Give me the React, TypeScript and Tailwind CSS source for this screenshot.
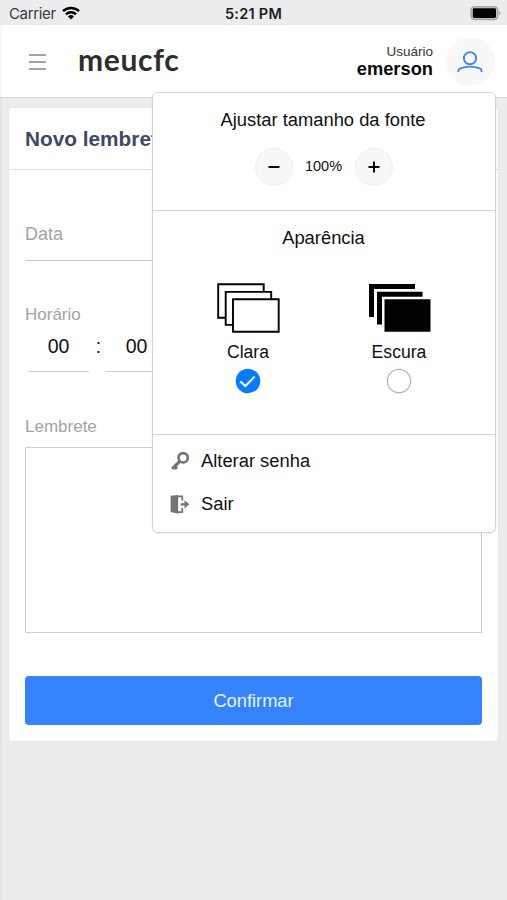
import { useState } from "react";

const THEMES = [
  { id: "clara", label: "Clara", dark: false },
  { id: "escura", label: "Escura", dark: true },
];

function StatusBar() {
  return (
    <div className="grid h-[25px] grid-cols-3 items-center bg-[#ebecee] font-['Inter',sans-serif] text-[#1c1c1e]">
      <div className="flex items-center gap-[6px] pl-[9px] pt-px">
        <span className="text-[15px] leading-none tracking-[-0.35px] text-[#3a3a3c]">
          Carrier
        </span>
        <svg className="h-[14px] w-[18px]" viewBox="0 0 18 14">
          <g fill="none" stroke="#000" strokeWidth="2.5">
            <path d="M1 5.2a11.4 11.4 0 0 1 16 0" />
            <path d="M4 8.4a7.1 7.1 0 0 1 10 0" />
          </g>
          <path d="M6 10.5a4.3 4.3 0 0 1 6 0L9 13.6z" />
        </svg>
      </div>
      <span className="pt-[3px] text-center text-[14.5px] leading-none font-semibold tracking-[0.25px]">
        5:21 PM
      </span>
      <svg
        className="mr-[6px] h-[16px] w-[31px] justify-self-end"
        viewBox="0 0 31 16"
      >
        <rect
          x="1"
          y="1.7"
          width="26.8"
          height="12.8"
          rx="3.6"
          fill="#c4c4c5"
          stroke="#a5a5a7"
          strokeWidth="1.4"
        />
        <rect x="2.8" y="3.2" width="23.2" height="9.8" rx="1.4" />
        <path d="M29 6.2c2 .6 2 3.2 0 3.8z" fill="#a5a5a7" />
      </svg>
    </div>
  );
}

function ThemeIcon({ dark }: { dark: boolean }) {
  if (dark) {
    return (
      <svg className="h-[50px] w-[63px]" viewBox="0 0 63 50">
        <path d="M1 1h46v5H6v28H1z" />
        <path d="M9 8.8h45.5v5H14v27.7H9z" />
        <path d="M16.5 16.2h46v32.5h-46z" />
      </svg>
    );
  }
  return (
    <svg className="h-[50px] w-[63px]" viewBox="0 0 63 50">
      <g fill="#fff" stroke="#000" strokeWidth="1.9">
        <path d="M1.2 1.3h45.5v33.5H1.2z" />
        <path d="M8.7 8.9h45.5v33H8.7z" />
        <path d="M16 16.2h45.7v32.5H16z" />
      </g>
    </svg>
  );
}

function UserMenu() {
  const [zoom, setZoom] = useState(100);
  const [theme, setTheme] = useState("clara");

  return (
    <div className="absolute top-[92px] left-[152px] z-10 h-[441px] w-[344px] rounded-[6px] border-[1.5px] border-[#d3d4d5] bg-white text-[18.35px] text-[#111] shadow-[0_1px_2px_rgba(0,0,0,0.08)]">
      <div className="flex h-[118px] flex-col items-center border-b border-[#d6d6d6]">
        <p className="mt-[14px] pr-[2px] leading-[26px]">
          Ajustar tamanho da fonte
        </p>
        <div className="mt-[15px] flex items-center pr-px">
          <button
            onClick={() => setZoom(zoom - 10)}
            className="flex size-[38px] items-center justify-center rounded-full border border-[#efefef] bg-[#f8f8f8]"
            aria-label="Diminuir"
          >
            <svg className="h-3 w-3" viewBox="0 0 12 12">
              <path d="M.5 6h11" stroke="#000" strokeWidth="1.9" />
            </svg>
          </button>
          <span className="w-[62px] text-center text-[14.5px]">{zoom}%</span>
          <button
            onClick={() => setZoom(zoom + 10)}
            className="flex size-[38px] items-center justify-center rounded-full border border-[#efefef] bg-[#f8f8f8]"
            aria-label="Aumentar"
          >
            <svg className="h-3 w-3" viewBox="0 0 12 12">
              <path d="M.5 6h11M6 .5v11" stroke="#000" strokeWidth="1.9" />
            </svg>
          </button>
        </div>
      </div>

      <div className="h-[224px] border-b border-[#d6d6d6] pt-[14px] pr-px">
        <p className="text-center leading-[26px]">Aparência</p>
        <div className="mt-[32px] grid grid-cols-[151px_151px] justify-center">
          {THEMES.map((item) => (
            <button
              key={item.id}
              onClick={() => setTheme(item.id)}
              className="flex flex-col items-center"
            >
              <ThemeIcon dark={item.dark} />
              <span className="mt-[7px] text-[17.6px] leading-[24px]">
                {item.label}
              </span>
              {theme === item.id ? (
                <svg className="mt-[4px] size-[26px]" viewBox="0 0 26 26">
                  <circle cx="13" cy="13" r="12.3" fill="#087bfd" />
                  <path
                    d="M5.400 13.400l5 4.600 9.200-9.400"
                    fill="none"
                    stroke="#fff"
                    strokeWidth="2"
                  />
                </svg>
              ) : (
                <svg className="mt-[4px] size-[26px]" viewBox="0 0 26 26">
                  <circle
                    cx="13"
                    cy="13"
                    r="11.7"
                    fill="#fff"
                    stroke="#b4b4b4"
                    strokeWidth="1.2"
                  />
                </svg>
              )}
            </button>
          ))}
        </div>
      </div>

      <ul className="flex flex-col gap-[17px] pt-[13px] pl-[17px]">
        <li className="flex h-[26px] items-center gap-[11px]">
          <svg className="size-[20px]" viewBox="0 0 20 20">
            <circle
              cx="13.2"
              cy="6.8"
              r="4.7"
              fill="none"
              stroke="#737373"
              strokeWidth="2.6"
            />
            <path
              d="M10 10.1L2.200 17.900M4.300 15.300l2.600 2.600"
              fill="none"
              stroke="#737373"
              strokeWidth="3.3"
            />
          </svg>
          <span>Alterar senha</span>
        </li>
        <li className="flex h-[26px] items-center gap-[11px]">
          <svg className="size-[20px]" viewBox="0 0 20 20" fill="#737373">
            <path d="M.6 1.7L8.1 1.100v18.600L.6 18z" />
            <path
              d="M8 2.300h4.300v4.300M12.300 13.900v4.300H8"
              fill="none"
              stroke="#737373"
              strokeWidth="1.7"
            />
            <path d="M10.500 9.200h4V6.200l4.800 4.100-4.800 4.100v-3h-4z" />
          </svg>
          <span>Sair</span>
        </li>
      </ul>
    </div>
  );
}

function Header() {
  return (
    <header className="flex h-[73px] items-center border-b border-[#d8d9da] bg-white">
      <svg className="ml-[28px] mt-[1px] h-[18px] w-[19px]" viewBox="0 0 19 18">
        <path
          d="M1 2h17M1 9h17M1 16h17"
          stroke="#858585"
          strokeWidth="1.5"
        />
      </svg>
      <span className="ml-[31px] -mt-[5px] font-['Lato',sans-serif] text-[30px] leading-none font-bold tracking-[0.65px] text-[#2e2e2e]">
        meucfc
      </span>
      <div className="mr-[13px] ml-auto text-right">
        <p className="text-[13.5px] leading-[15px] text-[#333]">Usuário</p>
        <p className="text-[18.3px] leading-[20px] font-bold text-[#0a0a0a]">
          emerson
        </p>
      </div>
      <div className="mr-[12px] flex size-[49px] items-center justify-center rounded-full bg-[#f8f8f8]">
        <svg className="mr-px mt-[2px] h-[22px] w-[26px]" viewBox="0 0 26 22">
          <g fill="none" stroke="#4285f4" strokeWidth="1.9">
            <circle cx="13" cy="7.2" r="6.1" />
            <path d="M1.400 20.900v-.9c0-1.200.7-2.200 1.900-2.600 6.200-2.300 13.200-2.300 19.400 0 1.200.4 1.900 1.400 1.900 2.600v.9" />
          </g>
        </svg>
      </div>
    </header>
  );
}

function ReminderForm() {
  return (
    <main className="mx-[9px] mt-[10px] h-[633px] rounded-[4px] bg-white shadow-[0_0_2px_rgba(0,0,0,0.08)]">
      <h1 className="h-[62px] border-b border-[#dfe0e1] pl-[16px] text-[20.8px] leading-[61px] font-bold text-[#3c4868]">
        Novo lembrete
      </h1>
      <div className="px-[16px] text-[18px] text-[#a3a3a3]">
        <div className="h-[91px] border-b border-[#c9c9c9] pt-[51px] leading-[26px]">
          Data
        </div>
        <p className="mt-[41px] text-[17px] leading-[26px]">Horário</p>
        <div className="ml-[3px] flex text-[19.5px] text-[#111]">
          <div className="h-[44px] w-[61px] border-b border-[#cfcfcf] text-center leading-[37px]">
            00
          </div>
          <span className="w-[17px] pl-[2px] text-center leading-[37px]">
            :
          </span>
          <div className="h-[44px] w-[61px] border-b border-[#cfcfcf] text-center leading-[37px]">
            00
          </div>
        </div>
        <p className="mt-[42px] text-[17px] leading-[26px]">Lembrete</p>
        <textarea
          className="mt-[7px] block h-[186px] w-full resize-none border-[1.5px] border-[#cfcfcf]"
          aria-label="Lembrete"
        />
        <button className="mt-[43px] h-[49px] w-full rounded-[4px] bg-[#3583fa] text-[18.3px] text-[#e8f1ff]">
          Confirmar
        </button>
      </div>
    </main>
  );
}

export default function App() {
  return (
    <div className="relative h-[900px] w-[507px] overflow-hidden bg-[#ebecee] font-['Liberation_Sans',Arial,sans-serif]">
      <StatusBar />
      <Header />
      <ReminderForm />
      <UserMenu />
      <div className="absolute top-[25px] bottom-0 left-0 w-[3px] bg-linear-to-r from-black/5 to-transparent" />
    </div>
  );
}
